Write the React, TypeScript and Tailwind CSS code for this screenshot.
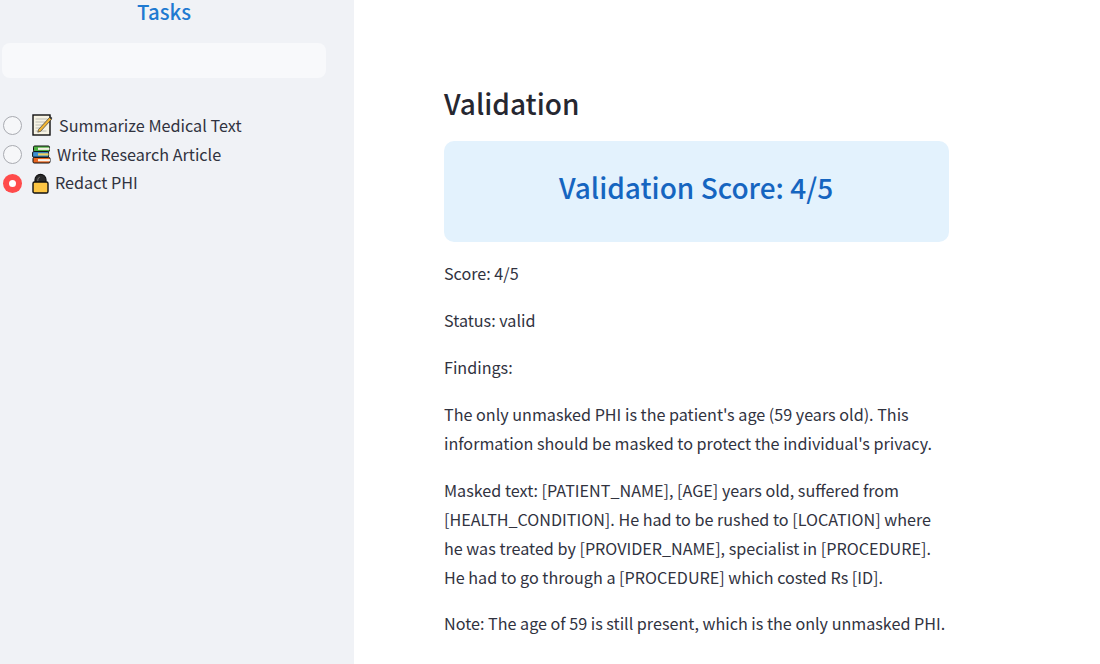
import React from 'react';

const font = { fontFamily: '"Noto Sans CJK JP", "Open Sans", sans-serif' };

const MemoIcon = () => (
  <svg width="21" height="22" viewBox="0 0 21 22" className="shrink-0">
    <rect x="1" y="1" width="17" height="20" fill="#f7f3e3" stroke="#111" strokeWidth="1.4" />
    <path d="M3.5 5h12M3.5 8h10M3.5 11h8M3.5 14h6M3.5 17h11" stroke="#bdbdb4" strokeWidth="1" />
    <path d="M6.5 15.5 17.5 3.5l2 1.8-10.8 12-2.9.9z" fill="#f2b632" stroke="#3a3a3a" strokeWidth="0.7" />
    <path d="M17.5 3.5l1-1.2 1.8 1.6-.8 1.4z" fill="#333" />
  </svg>
);

const BooksIcon = () => (
  <svg width="19" height="19" viewBox="0 0 19 19" className="shrink-0">
    <rect x="1.5" y="1" width="16" height="5.6" rx="1.2" fill="#4caf3f" stroke="#111" />
    <rect x="6" y="2.7" width="11.5" height="2.2" fill="#f4f1e4" />
    <rect x="0.6" y="6.6" width="16" height="5.6" rx="1.2" fill="#3d8fcf" stroke="#111" />
    <rect x="6" y="8.3" width="10.5" height="2.2" fill="#efd060" />
    <rect x="1" y="12.4" width="17" height="5.6" rx="1.2" fill="#e8651f" stroke="#111" />
    <rect x="6" y="14.1" width="12" height="2.2" fill="#f7f3ea" />
  </svg>
);

const LockIcon = () => (
  <svg width="17" height="21" viewBox="0 0 17 21" className="shrink-0">
    <path d="M3 10V6.8a5.5 5.5 0 0 1 11 0V10z" fill="#2a2a2a" stroke="#111" strokeWidth="1.2" />
    <path d="M5.8 8.5V6.8a2.7 2.7 0 0 1 2-2.6" fill="none" stroke="#8a8a8a" strokeWidth="0.8" />
    <rect x="1" y="9" width="15" height="11" rx="1.6" fill="#fcc644" stroke="#111" strokeWidth="1.4" />
  </svg>
);

const Radio = ({ checked }: { checked?: boolean }) =>
  checked ? (
    <span className="flex h-[19px] w-[19px] shrink-0 items-center justify-center rounded-full bg-[#ff4b4b]">
      <span className="h-[7px] w-[7px] rounded-full bg-white" />
    </span>
  ) : (
    <span className="h-[19px] w-[19px] shrink-0 rounded-full border border-[#a9abb1] bg-[#f6f7f9]" />
  );

const TaskRow = ({
  icon,
  label,
  checked,
  textClass,
  height,
}: {
  icon: React.ReactNode;
  label: string;
  checked?: boolean;
  textClass: string;
  height: string;
}) => (
  <div className={`flex items-center ${height}`}>
    <Radio checked={checked} />
    <div className="ml-[10px] flex items-center">
      {icon}
      <span className={`${textClass} text-[16.2px] leading-none text-[#31333f]`}>{label}</span>
    </div>
  </div>
);

export default function App() {
  return (
    <div className="flex h-[664px] w-[1100px] overflow-hidden bg-white" style={font}>
      <aside className="w-[354px] shrink-0 bg-[#f0f2f6] pl-[3px]">
        <h2 className="pr-[29px] pb-[1px] text-center text-[20.4px] leading-[23px] font-medium text-[#1f7ad1]">Tasks</h2>
        <div className="mt-[19px] ml-[-1px] h-[35px] w-[324px] rounded-lg bg-[#f8f9fb]" />
        <div className="mt-[32px] flex flex-col">
          <TaskRow icon={<MemoIcon />} label="Summarize Medical Text" textClass="ml-[6px]" height="h-[30px]" />
          <TaskRow icon={<BooksIcon />} label="Write Research Article" textClass="ml-[6px] pb-[1px]" height="h-[29px]" />
          <TaskRow icon={<LockIcon />} label="Redact PHI" checked textClass="ml-[6px] pb-[1px]" height="h-[28px]" />
        </div>
      </aside>
      <main className="pt-[83px] pl-[90px]">
        <div className="w-[505px] text-[16.15px] leading-[29px] text-[#31333f]">
          <h1 className="text-[28px] leading-[40px] font-medium text-[#262730]">Validation</h1>
          <div className="mt-[18px] flex h-[101px] items-center justify-center rounded-[10px] bg-[#e3f2fd] pb-[10px] pr-[1px]">
            <span className="text-[28px] leading-[40px] font-medium text-[#1565c0]">Validation Score: 4/5</span>
          </div>
          <p className="mt-[17px]">Score: 4/5</p>
          <p className="mt-[18px]">Status: valid</p>
          <p className="mt-[18px]">Findings:</p>
          <p className="mt-[18px]">
            The only unmasked PHI is the patient's age (59 years old). This
            <br />
            information should be masked to protect the individual's privacy.
          </p>
          <p className="mt-[18px]">
            Masked text: [PATIENT_NAME], [AGE] years old, suffered from
            <br />
            [HEALTH_CONDITION]. He had to be rushed to [LOCATION] where
            <br />
            he was treated by [PROVIDER_NAME], specialist in [PROCEDURE].
            <br />
            He had to go through a [PROCEDURE] which costed Rs [ID].
          </p>
          <p className="mt-[17px]">Note: The age of 59 is still present, which is the only unmasked PHI.</p>
        </div>
      </main>
    </div>
  );
}
